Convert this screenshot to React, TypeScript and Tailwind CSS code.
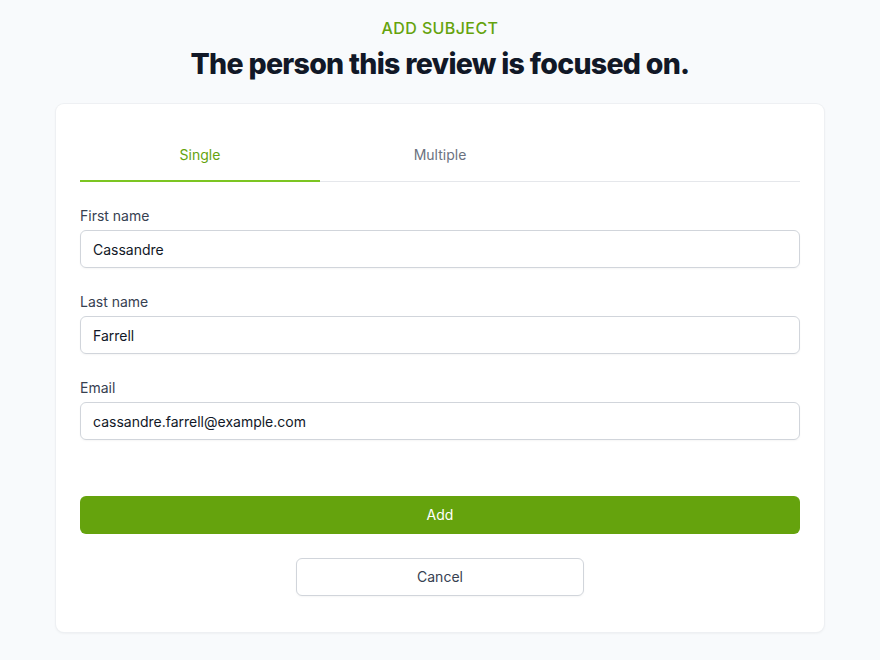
import React, { useState } from "react";

const fields = [
  { label: "First name", value: "Cassandre" },
  { label: "Last name", value: "Farrell" },
  { label: "Email", value: "cassandre.farrell@example.com" },
];

const App: React.FC = () => {
  const [tab, setTab] = useState<"single" | "multiple">("single");

  return (
    <div
      className="min-h-[660px] w-full bg-[#f8fafc] pt-[18px]"
      style={{ fontFamily: "Inter, 'Liberation Sans', sans-serif" }}
    >
      <div className="text-center">
        <p className="text-[16px] leading-5 font-medium tracking-wide text-[#65a30d]">ADD SUBJECT</p>
        <h1 className="mt-[8px] text-[28.5px] leading-[36px] font-extrabold tracking-tight text-[#111827]">
          The person this review is focused on.
        </h1>
      </div>

      {/* Card */}
      <div className="mx-[56px] mt-[22px] rounded-lg bg-white px-6 pt-6 pb-9 shadow-[0_1px_3px_rgba(0,0,0,0.08)] ring-1 ring-[#eef0f3]">
        {/* Tabs */}
        <div className="grid grid-cols-3 border-b border-[#e5e7eb]">
          <button
            className={`-mb-px h-[54px] border-b-2 pt-[2px] text-sm ${
              tab === "single" ? "border-[#7cc522] text-[#65a30d]" : "border-transparent text-[#6b7280]"
            }`}
            onClick={() => setTab("single")}
          >
            Single
          </button>
          <button
            className={`-mb-px h-[54px] border-b-2 pt-[2px] text-sm ${
              tab === "multiple" ? "border-[#7cc522] text-[#65a30d]" : "border-transparent text-[#6b7280]"
            }`}
            onClick={() => setTab("multiple")}
          >
            Multiple
          </button>
          <div />
        </div>

        <div className="mt-[24px] flex flex-col gap-6">
          {fields.map((f) => (
            <div key={f.label}>
              <label className="block text-sm leading-5 text-[#374151]">{f.label}</label>
              <input
                defaultValue={f.value}
                className="mt-1 block h-[38px] w-full rounded-md border border-[#d1d5db] px-3 text-sm text-[#111827] shadow-[0_1px_2px_rgba(0,0,0,0.04)] outline-none"
              />
            </div>
          ))}
        </div>

        <button className="mt-[56px] h-[38px] w-full rounded-md bg-[#65a30d] text-sm text-white">Add</button>
        <div className="mt-6 flex justify-center">
          <button className="h-[38px] w-[288px] rounded-md border border-[#d1d5db] bg-white text-sm text-[#374151] shadow-[0_1px_2px_rgba(0,0,0,0.04)]">
            Cancel
          </button>
        </div>
      </div>
    </div>
  );
};

export default App;
